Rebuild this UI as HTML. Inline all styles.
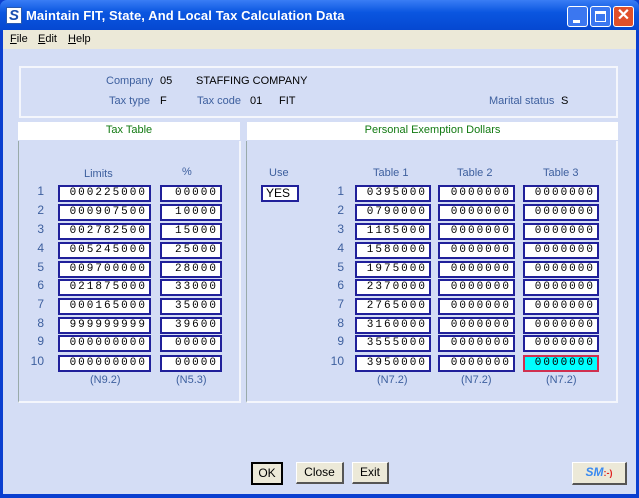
<!DOCTYPE html><html><head><style>
*{margin:0;padding:0;box-sizing:border-box}
body{width:639px;height:498px;overflow:hidden;background:#0a3fd0;font-family:"Liberation Sans",sans-serif;font-size:11px;position:relative}
.a{position:absolute}
.title{left:0;top:0;width:639px;height:31px;background:linear-gradient(#3a7df5,#0a56e0 40%,#0547d0);border-radius:7px 7px 0 0}
.tt{left:26px;top:8px;color:#fff;font-weight:bold;font-size:13px;letter-spacing:0.1px}
.menu{left:3px;top:30px;width:633px;height:19px;background:#ece9d8}
.main{left:3px;top:49px;width:633px;height:445px;background:#d4ddf5}
.lbl{color:#3d5f9e}
.blk{color:#000}
.box{border:2px solid #20209a;background:#fff;font-family:"Liberation Mono",monospace;font-size:11px;text-align:right;padding-right:2px;height:17px;line-height:13px;letter-spacing:2px}
.hd{background:#fff;color:#127a12;text-align:center;line-height:17px;height:18px}
.btn{background:#ece9d8;border:1px solid #fff;border-right:2px solid #555;border-bottom:2px solid #555;text-align:center;line-height:19px;font-size:12px}
.n{color:#3d5f9e;font-size:12px;width:20px;text-align:right}
</style></head><body>
<div class="a title"></div>
<div class="a" style="left:6px;top:7px;width:16px;height:17px;background:#fff;border:1px solid #2a5ab0"><div style="color:#1a4fb0;font-weight:bold;font-style:italic;font-size:15px;line-height:15px;text-align:center">S</div></div>
<div class="a tt">Maintain FIT, State, And Local Tax Calculation Data</div>
<div class="a" style="left:567px;top:6px;width:21px;height:21px;background:#3b77f0;border:1px solid #fff;border-radius:3px"><div style="position:absolute;left:5px;top:13px;width:7px;height:3px;background:#fff"></div></div>
<div class="a" style="left:590px;top:6px;width:21px;height:21px;background:#3b77f0;border:1px solid #fff;border-radius:3px"><div style="position:absolute;left:4px;top:4px;width:11px;height:11px;border:1px solid #fff;border-top-width:3px"></div></div>
<div class="a" style="left:613px;top:6px;width:21px;height:21px;background:#e0502a;border:1px solid #fff;border-radius:3px;color:#fff;font-weight:bold;font-size:16px;line-height:18px;text-align:center">✕</div>
<div class="a menu"><span class="a" style="left:7px;top:3px"><u>F</u>ile</span><span class="a" style="left:35px;top:3px"><u>E</u>dit</span><span class="a" style="left:65px;top:3px"><u>H</u>elp</span></div>
<div class="a main"></div>
<div class="a" style="left:19px;top:66px;width:599px;height:52px;border:2px solid #f4f6fc"></div>
<span class="a lbl" style="left:106px;top:75px">Company</span><span class="a blk" style="left:160px;top:75px">05</span><span class="a blk" style="left:196px;top:75px">STAFFING COMPANY</span>
<span class="a lbl" style="left:109px;top:95px">Tax type</span><span class="a blk" style="left:160px;top:95px">F</span>
<span class="a lbl" style="left:197px;top:95px">Tax code</span><span class="a blk" style="left:250px;top:95px">01</span><span class="a blk" style="left:279px;top:95px">FIT</span>
<span class="a lbl" style="left:489px;top:95px">Marital status</span><span class="a blk" style="left:561px;top:95px">S</span>
<div class="a hd" style="left:18px;top:122px;width:222px">Tax Table</div>
<div class="a hd" style="left:247px;top:122px;width:371px">Personal Exemption Dollars</div>
<div class="a" style="left:18px;top:141px;width:223px;height:262px;border-right:2px solid #f4f6fc;border-bottom:2px solid #f4f6fc;border-left:1px solid #9aa;"></div>
<div class="a" style="left:246px;top:141px;width:372px;height:262px;border-right:2px solid #f4f6fc;border-bottom:2px solid #f4f6fc;border-left:1px solid #9aa"></div>
<span class="a lbl" style="left:84px;top:168px">Limits</span><span class="a lbl" style="left:182px;top:166px">%</span>
<span class="a lbl" style="left:269px;top:167px">Use</span>
<span class="a lbl" style="left:373px;top:167px">Table 1</span><span class="a lbl" style="left:457px;top:167px">Table 2</span><span class="a lbl" style="left:543px;top:167px">Table 3</span>
<div class="a box" style="left:261px;top:185px;width:38px;text-align:left;padding-left:3px;letter-spacing:0;font-family:'Liberation Sans',sans-serif;font-size:12px">YES</div>
<div id="rows"></div>
<span class="a lbl" style="left:90px;top:374px">(N9.2)</span><span class="a lbl" style="left:176px;top:374px">(N5.3)</span>
<span class="a lbl" style="left:377px;top:374px">(N7.2)</span><span class="a lbl" style="left:461px;top:374px">(N7.2)</span><span class="a lbl" style="left:546px;top:374px">(N7.2)</span>
<div class="a btn" style="left:251px;top:462px;width:32px;border:2px solid #000">OK</div>
<div class="a btn" style="left:296px;top:462px;width:48px">Close</div>
<div class="a btn" style="left:352px;top:462px;width:37px">Exit</div>
<div class="a btn" style="left:572px;top:462px;width:55px;font-weight:bold;font-style:italic"><span style="color:#3a8af0">SM</span><span style="color:#e02020;font-size:9px;font-style:normal">:-)</span></div>
<script>
var ys=[185,204,223,242,261,279,298,317,335,355];
var L=["000225000","000907500","002782500","005245000","009700000","021875000","000165000","999999999","000000000","000000000"];
var P=["00000","10000","15000","25000","28000","33000","35000","39600","00000","00000"];
var T=["0395000","0790000","1185000","1580000","1975000","2370000","2765000","3160000","3555000","3950000"];
var h="";
for(var i=0;i<10;i++){var y=ys[i];
h+='<span class="a n" style="left:24px;top:'+(y-1)+'px">'+(i+1)+'</span>';
h+='<div class="a box" style="left:58px;top:'+y+'px;width:93px">'+L[i]+'</div>';
h+='<div class="a box" style="left:160px;top:'+y+'px;width:62px">'+P[i]+'</div>';
h+='<span class="a n" style="left:324px;top:'+(y-1)+'px">'+(i+1)+'</span>';
h+='<div class="a box" style="left:355px;top:'+y+'px;width:76px">'+T[i]+'</div>';
h+='<div class="a box" style="left:438px;top:'+y+'px;width:77px">0000000</div>';
h+='<div class="a box" style="left:523px;top:'+y+'px;width:76px'+(i==9?';background:#00ffff;border-color:#d03050':'')+'">0000000</div>';}
document.getElementById("rows").innerHTML=h;
</script>
</body></html>
